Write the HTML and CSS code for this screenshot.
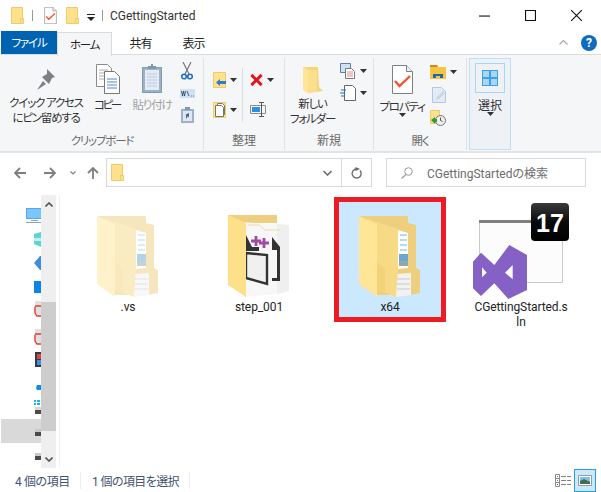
FILE: index.html
```html
<!DOCTYPE html>
<html lang="ja">

<head>
  <meta charset="UTF-8">
  <title>CGettingStarted</title>
  <link rel="stylesheet" href="styles.css">
</head>

<body>
  <svg class="defs" width="0" height="0">
    <symbol id="mini-folder" viewBox="0 0 13 17">
      <path d="M.5.5h11v16H.5z" fill="#fee08d" stroke="#eccd6a" />
      <path d="M9.5 16.5v-5h3v5z" fill="#fee08d" stroke="#eccd6a" />
    </symbol>
    <symbol id="arrow-down" viewBox="0 0 7 4">
      <path d="M0 0h7L3.500 4z" fill="#333" />
    </symbol>
    <symbol id="check-doc" viewBox="0 0 21 29">
      <path d="M.5.5h14l6 6v22H.5z" fill="#fff" stroke="#808080" />
      <path d="M14.500.5v6h6" fill="#eee" stroke="#808080" />
      <path d="M3 16l4.500 5L18 11" fill="none" stroke="#f0562a" stroke-width="2.400" />
    </symbol>
    <symbol id="big-folder" viewBox="0 0 62 82">
      <path d="M0 0h49v7l8 2v43l4 2v23l-10 2H18z" fill="#eecf7e" />
      <path d="M39 14l10 3v35l-10 1z" fill="#fff" />
      <path d="M41 19h7M41 24h7M41 29h7M41 34h7" stroke="#70b5e0" />
      <path d="M40 38h9v12h-9z" fill="#6aa8d2" />
      <path d="M40 45h9v5h-9z" fill="#8fa9a8" />
      <path d="M37 58l15-1v22l-15 2z" fill="#f2f2f2" />
      <path d="M38 63h13M38 68h13M38 73h13" stroke="#c9c9c9" />
      <path d="M9 3l30 10v39l-2 29-28-11z" fill="#f7da86" />
      <path d="M0 0l18 8v73L0 68z" fill="#ffe596" />
      <path d="M18 46l8 7v24l-8-3z" fill="#f3d27a" />
    </symbol>
  </svg>

  <div class="window">
    <div class="titlebar">
      <svg class="qa-folder"><use href="#mini-folder" /></svg>
      <i class="qa-sep"></i>
      <svg class="qa-check"><use href="#check-doc" /></svg>
      <svg class="qa-folder"><use href="#mini-folder" /></svg>
      <svg class="qa-menu" viewBox="0 0 8 7">
        <path d="M0 0h8v1H0zM0 3h8L4 7z" fill="#222" />
      </svg>
      <i class="qa-sep"></i>
      <span class="title">CGettingStarted</span>
      <div class="win-controls">
        <svg viewBox="0 0 10 10"><path d="M0 5.500h10" stroke="#111" /></svg>
        <svg viewBox="0 0 10 10"><path d="M.5.500h9v9h-9z" fill="none" stroke="#111" /></svg>
        <svg viewBox="0 0 10 10"><path d="M0 0l10 10M10 0L0 10" stroke="#111" /></svg>
      </div>
    </div>

    <div class="tabs">
      <span class="tab tab-file kana">ファイル</span>
      <span class="tab tab-home kana">ホーム</span>
      <span class="tab tab-share">共有</span>
      <span class="tab tab-view">表示</span>
      <svg class="collapse" viewBox="0 0 9 5">
        <path d="M.5 4.500l4-4 4 4" fill="none" stroke="#a8a8a8" stroke-width="1.200" />
      </svg>
      <span class="help">?</span>
    </div>

    <div class="ribbon">
      <section class="group group-clipboard">
        <div class="group-body">
          <div class="big big-pin">
            <svg class="pin" viewBox="0 0 20 23">
              <path d="M11 1l8 8-3 1-3 6-7-7 5-3zM7 13l-6 9 9-6z" fill="#7b8086" />
            </svg>
            <span class="kana">クイック アクセス<br>にピン留めする</span>
          </div>
          <div class="big big-copy">
            <svg viewBox="0 0 24 30">
              <path d="M.5.500h11l4 4v18H.5z" fill="#fff" stroke="#8a8a8a" />
              <path d="M3 6h9M3 9h10M3 12h10M3 15h10" stroke="#aaa" />
              <path d="M8.500 7.500h10l5 5v17h-15z" fill="#fff" stroke="#777" />
              <path d="M11 15h10M11 18h10M11 21h10M11 24h10" stroke="#4a86c8" />
            </svg>
            <span class="kana tight">コピー</span>
          </div>
          <div class="big big-paste">
            <svg viewBox="0 0 20 29">
              <path d="M.5 3.500h19v25H.5z" fill="#9db2c8" stroke="#8197b0" />
              <path d="M3 6h14v20H3z" fill="#e4ebf5" />
              <path d="M5 10h10M5 13h10M5 16h10M5 19h10M5 22h10" stroke="#bfcbdc" />
              <path d="M6 4V2h3V0h2v2h3v3H6z" fill="#8197b0" />
            </svg>
            <span class="kana">貼り付け</span>
          </div>
          <div class="small-stack">
            <svg class="scissors" viewBox="0 0 12 18">
              <path d="M2 0l6 12M10 0L4 12" stroke="#777" stroke-width="1.200" />
              <circle cx="3" cy="14.500" r="2.300" fill="none" stroke="#1f74c0" stroke-width="1.600" />
              <circle cx="9" cy="14.500" r="2.300" fill="none" stroke="#1f74c0" stroke-width="1.600" />
            </svg>
            <svg class="copy-path" viewBox="0 0 15 9">
              <path d="M0 0h15v9H0z" fill="#cfe2f5" />
              <path d="M1.500 2l1 5 1-5 1 5 1-5M7 2l2 5M11 7h.8M13 7h.8" stroke="#23415f" stroke-width=".8" fill="none" />
            </svg>
            <svg class="shortcut" viewBox="0 0 13 16">
              <path d="M0 2h13v14H0z" fill="#9db2c8" />
              <path d="M2 4h9v10H2z" fill="#dfe7f2" />
              <path d="M4 0h5v3H4z" fill="#8197b0" />
              <path d="M5 12V8h-1l4-2v5l-1-2-2 3z" fill="#4a6585" />
            </svg>
          </div>
        </div>
        <span class="group-label kana">クリップボード</span>
      </section>

      <section class="group group-organize">
        <div class="group-body">
          <div class="org-col">
            <div class="small-drop">
              <svg class="org-icon" viewBox="0 0 13 16">
                <path d="M.5.500h12v15H.500z" fill="#fee08d" stroke="#eccd6a" />
                <path d="M13 9H7V7l-4 3.500L7 14v-2h6z" fill="#2a7fd0" />
              </svg>
              <svg class="caret"><use href="#arrow-down" /></svg>
            </div>
            <div class="small-drop">
              <svg class="org-icon" viewBox="0 0 13 16">
                <path d="M.5.500h12v15H.500z" fill="#fee08d" stroke="#eccd6a" />
                <path d="M4.500 1.500h5l2 2v9h-7z" fill="#fff" stroke="#777" />
                <path d="M2.500 3.500h6l2 2v9h-8z" fill="#fff" stroke="#777" />
              </svg>
              <svg class="caret"><use href="#arrow-down" /></svg>
            </div>
          </div>
          <i class="org-sep"></i>
          <div class="org-col">
            <div class="small-drop">
              <svg class="org-icon" viewBox="0 0 14 14">
                <path d="M1.500 1.500l11 11M12.500 1.500l-11 11" stroke="#e3141e" stroke-width="3.200" />
              </svg>
              <svg class="caret"><use href="#arrow-down" /></svg>
            </div>
            <svg class="rename" viewBox="0 0 16 15">
              <path d="M.5 3.500h15v8H.5z" fill="#f5f6f7" stroke="#8a8a8a" />
              <path d="M2 5h8v5H2z" fill="#2f8fe0" />
              <path d="M9 .5h5M11.500.500v14M9 14.500h5" stroke="#555" fill="none" />
            </svg>
          </div>
        </div>
        <span class="group-label">整理</span>
      </section>

      <section class="group group-new">
        <div class="group-body">
          <div class="big big-folder">
            <svg viewBox="0 0 20 27">
              <path d="M0 0h15l1 20 4 4-15 2z" fill="#f6d579" />
              <path d="M0 0l5 3 1 24-6-4z" fill="#ffe596" />
              <path d="M5 3h9v22H5z" fill="#fadf8c" />
            </svg>
            <span class="kana">新しい<br>フォルダー</span>
          </div>
          <div class="small-stack-new">
            <div class="small-drop">
              <svg class="new-icon" viewBox="0 0 16 16">
                <path d="M.5.500h10v9H.500z" fill="#cfe2f5" stroke="#5f7f9f" />
                <path d="M5.500 5.500h6l3 3v7h-9z" fill="#fff" stroke="#777" />
                <path d="M7 9h6M7 11h6M7 13h6" stroke="#e08a8a" />
              </svg>
              <svg class="caret"><use href="#arrow-down" /></svg>
            </div>
            <div class="small-drop">
              <svg class="new-icon" viewBox="0 0 16 16">
                <path d="M4.500.500h8l3 3v12h-11z" fill="#fff" stroke="#666" />
                <path d="M1 5h5M0 8h5M1 11h4" stroke="#1f74c0" stroke-width="1.200" />
              </svg>
              <svg class="caret"><use href="#arrow-down" /></svg>
            </div>
          </div>
        </div>
        <span class="group-label">新規</span>
      </section>

      <section class="group group-open">
        <div class="group-body">
          <div class="big big-props">
            <svg><use href="#check-doc" /></svg>
            <span class="kana">プロパティ</span>
            <svg class="caret"><use href="#arrow-down" /></svg>
          </div>
          <div class="small-stack-open">
            <div class="small-drop">
              <svg class="open-icon" viewBox="0 0 16 14">
                <path d="M0 0h7l1 2h8v12H0z" fill="#f5c440" />
                <path d="M0 0h7l1 2H0z" fill="#c98a1e" />
                <path d="M3 13V9h10v4h-3v-2H6v2z" fill="#1f66b0" />
              </svg>
              <svg class="caret"><use href="#arrow-down" /></svg>
            </div>
            <svg class="open-edit" viewBox="0 0 14 16">
              <path d="M.5.500h9l4 4v11H.500z" fill="#e3ebf6" stroke="#b8c6dc" />
              <path d="M4 13l1-3 6-6 2 2-6 6z" fill="#c8d4e6" />
            </svg>
            <svg class="open-history" viewBox="0 0 16 16">
              <path d="M.5.500h9v13H.500z" fill="#fee08d" stroke="#eccd6a" />
              <circle cx="10.500" cy="10.500" r="5" fill="#eee" stroke="#777" />
              <path d="M10.500 7.500v3l2 1" fill="none" stroke="#555" />
              <path d="M1 10l4-3v2h2v3H5v2z" fill="#2f9a3a" />
            </svg>
          </div>
        </div>
        <span class="group-label kana">開く</span>
      </section>

      <section class="group-select">
        <div class="select-btn">
          <svg viewBox="0 0 16 16">
            <path d="M0 0h16v16H0z" fill="#3fa0e8" />
            <path d="M1 1h6v6H1zM9 1h6v6H9zM1 9h6v6H1zM9 9h6v6H9z" fill="#a9d6f7" />
          </svg>
        </div>
        <span>選択</span>
        <svg class="caret"><use href="#arrow-down" /></svg>
      </section>
    </div>

    <div class="navrow">
      <svg class="nav-arrow" viewBox="0 0 12 12">
        <path d="M12 6H1.500M6 1L1 6l5 5" fill="none" stroke="#7f7f7f" stroke-width="1.800" />
      </svg>
      <svg class="nav-arrow nav-forward" viewBox="0 0 12 12">
        <path d="M0 6h10.500M6 1l5 5-5 5" fill="none" stroke="#7f7f7f" stroke-width="1.800" />
      </svg>
      <svg class="nav-recent" viewBox="0 0 6 4">
        <path d="M.5.500L3 3 5.500.500" fill="none" stroke="#808080" stroke-width="1.200" />
      </svg>
      <svg class="nav-arrow nav-up" viewBox="0 0 12 12">
        <path d="M6 12V1.500M1 6l5-5 5 5" fill="none" stroke="#7f7f7f" stroke-width="1.800" />
      </svg>
      <div class="address">
        <svg class="addr-folder"><use href="#mini-folder" /></svg>
        <span class="addr-drop">
          <svg viewBox="0 0 9 6"><path d="M.5 1l4 4 4-4" fill="none" stroke="#666" stroke-width="1.500" /></svg>
        </span>
        <span class="addr-refresh">
          <svg viewBox="0 0 11 12">
            <path d="M9 3.500a4.500 4.500 0 1 1-3.500-1.500H7" fill="none" stroke="#666" stroke-width="1.300" />
            <path d="M3.500 0v4L8 2z" fill="#666" transform="translate(1 0)" />
          </svg>
        </span>
      </div>
      <div class="search">
        <svg viewBox="0 0 12 12">
          <circle cx="7.500" cy="4.500" r="3.800" fill="none" stroke="#999" />
          <path d="M5 7.500L.5 11.500" stroke="#999" stroke-width="1.200" />
        </svg>
        <span>CGettingStartedの検索</span>
      </div>
    </div>

    <div class="content">
      <div class="navpane">
        <svg class="nav-tree" viewBox="0 0 40 273">
          <path d="M0 224h40v24H0z" fill="#d9d9d9" />
          <path d="M25 13h15v11H25z" fill="#52a8ef" />
          <path d="M26 14h14v9H26z" fill="#7cc7fa" />
          <path d="M30 25h7v1h-7zM25 27h15v1H25z" fill="#8aa0b4" />
          <path d="M33 39l7-2v15l-7-3z" fill="#5ed5d5" />
          <path d="M33 43h7v3h-7z" fill="#bdf0ee" />
          <path d="M33 68l6-7h1v14h-1z" fill="#3d8de0" />
          <path d="M33 86h7v12h-7z" fill="#0a84e8" />
          <path d="M34 106h6v5l-6-1zM33 111h7v9h-5l-2-3z" fill="#e0e0e0" />
          <path d="M34 111h6M34 112v6l2 3h4" fill="none" stroke="#e23a22" stroke-width="1.300" />
          <path d="M34 134h6v5h-6zM33 139h7v9h-5l-2-3z" fill="#e0e0e0" />
          <path d="M34 139h6M34 140v6l2 3h4" fill="none" stroke="#e23a22" stroke-width="1.300" />
          <path d="M34 157h6v15h-6z" fill="#3a3a3a" />
          <path d="M36 159h4v5h-4z" fill="#d84a4a" />
          <path d="M36 165h4v5h-4z" fill="#3d8de0" />
          <path d="M36 190h4v5h-4l-1-2z" fill="#0a8cf0" />
          <path d="M33 205h2v2h-2zM36 205h3v2h-3zM33 208h2v2h-2zM36 208h3v2h-3z" fill="#18b4f0" />
          <path d="M34 212h6v3h-6z" fill="#d8d8d8" />
          <path d="M34 215h6v4h-6zM34 237h6v4h-6zM34 261h6v4h-6z" fill="#4a4a4a" />
          <path d="M34 234h6v3h-6zM34 258h6v3h-6z" fill="#c8c8c8" />
        </svg>
        <div class="scrollbar">
          <div class="scroll-top">
            <svg viewBox="0 0 8 5"><path d="M.5 4.500L4 1l3.500 3.500" fill="none" stroke="#555" stroke-width="1.600" /></svg>
          </div>
          <div class="scroll-thumb"></div>
          <div class="scroll-bottom">
            <svg viewBox="0 0 8 5"><path d="M.5.500L4 4 7.500.500" fill="none" stroke="#555" stroke-width="1.600" /></svg>
          </div>
        </div>
      </div>

      <div class="files">
        <div class="file">
          <div class="file-icon">
            <svg class="folder hidden-folder"><use href="#big-folder" /></svg>
          </div>
          <span class="file-name">.vs</span>
        </div>

        <div class="file">
          <div class="file-icon">
            <svg class="folder" viewBox="0 0 62 84">
              <path d="M0 0h49v8H0z" fill="#eecf7e" />
              <path d="M11 7l50 3v66l-12 3-33 3z" fill="#f7f7f7" />
              <path d="M49 9l12 1v66l-12 3z" fill="#efefef" />
              <path d="M18 20l6 12h7v4H17z" fill="#333" />
              <path d="M44 22l8 10v34h-8v-3h5V35h-5z" fill="#333" />
              <path d="M18 38l21 2v29l-21-6z" fill="#f0f0f0" stroke="#333" stroke-width="2.400" />
              <path d="M20 10h11l6 5h15" fill="none" stroke="#ecdba5" />
              <path d="M28 21v10M23 26h10M36 23v10M31 28h10" fill="none" stroke="#a04aa4" stroke-width="2.800" />
              <path d="M0 0l18 8v74L0 70z" fill="#ffe08a" />
            </svg>
          </div>
          <span class="file-name">step_001</span>
        </div>

        <div class="file is-selected">
          <div class="file-icon">
            <svg class="folder"><use href="#big-folder" /></svg>
          </div>
          <span class="file-name">x64</span>
        </div>

        <div class="file">
          <div class="file-icon">
            <svg class="sln" viewBox="0 0 100 100">
              <defs>
                <linearGradient id="badge" x1="0" y1="0" x2="0" y2="1">
                  <stop offset="0" stop-color="#3a3a3a" />
                  <stop offset=".5" stop-color="#0a0a0a" />
                  <stop offset="1" stop-color="#000" />
                </linearGradient>
              </defs>
              <path d="M8.500 20.500h83v62h-83z" fill="#fcfcfc" stroke="#cacaca" />
              <path d="M8 20h55v3H8z" fill="#808080" />
              <rect x="60" y="3" width="38" height="38" rx="4" fill="url(#badge)" />
              <text class="badge-text" x="79" y="32">17</text>
              <path fill-rule="evenodd" fill="#8661c5" d="M2 61.700L10 52.700 23.300 65 38.300 45 56 55V90L37.300 99 23.300 83.300 10 96 2 88.300zM11 67.300L15.700 72.700 11 77.300zM41.700 65L34 72.700 41.700 79.300z" />
            </svg>
          </div>
          <span class="file-name">CGettingStarted.sln</span>
        </div>
      </div>
    </div>

    <div class="statusbar">
      <span class="status-count">4 個の項目</span>
      <span class="status-selected">1 個の項目を選択</span>
      <div class="view-switch">
        <svg class="view-details" viewBox="0 0 16 13">
          <path d="M.5.500h4v12h-4z" fill="#fff" stroke="#8a8a8a" />
          <path d="M.5 4.500h4M.5 8.500h4" stroke="#8a8a8a" />
          <path d="M2 2h1v1H2zM2 6h1v1H2z" fill="#4a86c8" />
          <path d="M2 10h1v1H2z" fill="#d03030" />
          <path d="M6 2.500h5M12 2.500h4M6 6.500h5M12 6.500h4M6 10.500h5M12 10.500h4" stroke="#808080" />
        </svg>
        <div class="view-large">
          <svg viewBox="0 0 14 11">
            <path d="M.5.500h13v10H.500z" fill="#fff" stroke="#9a9a9a" />
            <path d="M2 2h10v7H2z" fill="#7cc0ee" />
            <path d="M2 6l4-2 6 3v2H2z" fill="#3f6f4f" />
          </svg>
        </div>
      </div>
    </div>
  </div>
</body>

</html>
```

FILE: styles.css
```css
* {
  box-sizing: border-box;
}

html,
body {
  margin: 0;
  padding: 0;
  background-color: #fff;
}

body {
  font-family: Roboto, "Noto Sans CJK JP", sans-serif;
  font-size: 12px;
  color: #222;
  font-feature-settings: "palt";
}

svg {
  display: block;
  flex: none;
}

.defs {
  position: absolute;
}

.window {
  width: 601px;
  height: 492px;
  display: flex;
  flex-direction: column;
  overflow: hidden;
}

/* kana runs narrower in the ribbon than the CJK font sets it */
.kana {
  font-size: 11.5px;
  letter-spacing: -1.2px;
}

.tight {
  letter-spacing: -2.4px;
}

/* title bar */
.titlebar {
  height: 31px;
  flex: none;
  display: flex;
  align-items: center;
  padding-left: 11px;
}

.qa-folder {
  width: 13px;
  height: 17px;
}

.qa-sep {
  width: 1px;
  height: 11px;
  margin: 0 11px 0 8px;
  background-color: #9a9a9a;
}

.qa-check {
  width: 13px;
  height: 17px;
  margin-right: 9px;
}

.qa-menu {
  width: 8px;
  height: 7px;
  margin-left: 8px;
  margin-top: 3px;
}

.qa-menu + .qa-sep {
  margin-left: 7px;
  margin-right: 7px;
}

.title {
  color: #333;
}

.win-controls {
  margin-left: auto;
  margin-right: 19px;
  display: flex;
  gap: 35px;
}

.win-controls svg {
  width: 11px;
  height: 11px;
}

/* tabs */
.tabs {
  height: 24px;
  flex: none;
  display: flex;
  align-items: center;
  padding-left: 1px;
  border-bottom: 1px solid #dadbdc;
}

.tab {
  height: 24px;
  display: flex;
  align-items: center;
  justify-content: center;
  white-space: nowrap;
}

.tab-file {
  width: 56px;
  height: 23px;
  margin-top: -1px;
  background-color: #0063b1;
  color: #fff;
}

.tab-home {
  width: 55px;
  background-color: #f5f6f7;
  border: 1px solid #dadbdc;
  border-bottom: 0;
  position: relative;
  top: 1px;
}

.tab-share {
  margin-left: 17px;
  width: 23px;
  letter-spacing: -1px;
}

.tab-view {
  margin-left: 30px;
  width: 23px;
  letter-spacing: -1px;
}

.collapse {
  width: 9px;
  height: 5px;
  margin-left: auto;
  margin-right: 13px;
}

.help {
  width: 16px;
  height: 16px;
  margin-right: 4px;
  border-radius: 50%;
  background-color: #0f6cbd;
  color: #fff;
  font-weight: bold;
  font-size: 12px;
  line-height: 16px;
  text-align: center;
}

/* ribbon */
.ribbon {
  height: 98px;
  flex: none;
  display: flex;
  padding: 3px 0 1px 1px;
  background-color: #f5f6f7;
  border-bottom: 2px solid #e3e4e5;
  line-height: 15px;
  text-align: center;
}

.group {
  display: flex;
  flex-direction: column;
  border-right: 1px solid #e1e2e3;
}

.group-body {
  flex: 1;
  display: flex;
}

.group-label {
  height: 21px;
  color: #6a6a6a;
  padding-top: 5px;
}

.group-clipboard {
  width: 203px;
}

.group-organize {
  width: 81px;
}

.group-new {
  width: 89px;
}

.group-open {
  width: 93px;
}

.big {
  display: flex;
  flex-direction: column;
  align-items: center;
  color: #333;
  white-space: nowrap;
}

.big svg:first-child {
  margin-top: 6px;
  margin-bottom: 4px;
}

.big-pin {
  width: 92px;
  padding-right: 2px;
}

.pin {
  width: 20px;
  height: 23px;
  margin-top: 10px !important;
  margin-bottom: 5px !important;
}

.big-copy {
  width: 40px;
  margin-left: -6px;
}

.big-copy svg {
  width: 24px;
  height: 30px;
  margin-left: 2px;
}

.big-paste svg {
  width: 20px;
  height: 29px;
  margin-bottom: 5px !important;
}

.big-paste {
  width: 50px;
  color: #a2a2a2;
}

.small-stack {
  display: flex;
  flex-direction: column;
  align-items: center;
  width: 16px;
  margin-left: 2px;
  padding-top: 4px;
}

.scissors {
  width: 12px;
  height: 18px;
  margin-bottom: 9px;
}

.copy-path {
  width: 15px;
  height: 9px;
  margin-bottom: 9px;
}

.shortcut {
  width: 13px;
  height: 16px;
}

.group-organize .group-body {
  padding: 14px 0 0 9px;
}

.org-col {
  width: 29px;
  display: flex;
  flex-direction: column;
  gap: 14px;
}

.org-col + .org-sep + .org-col {
  padding-left: 7px;
  width: 34px;
}

.org-sep {
  width: 1px;
  height: 54px;
  margin-top: -4px;
  background-color: #dcdddf;
}

.small-drop {
  display: flex;
  align-items: center;
  gap: 4px;
}

.org-icon {
  width: 13px;
  height: 16px;
}

.caret {
  width: 7px;
  height: 4px;
}

.rename {
  width: 16px;
  height: 15px;
}

.big-folder {
  width: 55px;
}

.big-folder svg:first-child {
  width: 20px;
  height: 27px;
  margin-top: 9px;
  margin-bottom: 3px;
}

.small-stack-new {
  display: flex;
  flex-direction: column;
  gap: 6px;
  padding-top: 5px;
}

.new-icon {
  width: 16px;
  height: 16px;
}

.big-props {
  width: 56px;
}

.big-props svg:first-child {
  width: 21px;
  height: 29px;
  margin-top: 7px;
  margin-bottom: 6px;
}

.big-props .caret {
  margin-top: -2px;
}

.small-stack-open {
  display: flex;
  flex-direction: column;
  padding-top: 7px;
}

.open-icon {
  width: 16px;
  height: 14px;
}

.open-edit {
  width: 14px;
  height: 16px;
  margin: 8px 0 7px 2px;
}

.open-history {
  width: 16px;
  height: 16px;
}

.group-select {
  width: 42px;
  height: 92px;
  margin-left: 2px;
  padding: 4px 5px 0;
  display: flex;
  flex-direction: column;
  align-items: center;
  background-color: #eef2f6;
  border: 1px solid #c3dff5;
  color: #333;
}

.select-btn {
  width: 30px;
  height: 30px;
  display: flex;
  align-items: center;
  justify-content: center;
  border: 1px solid #a8d5f7;
  margin-bottom: 6px;
  flex: none;
}

.select-btn svg {
  width: 16px;
  height: 16px;
}

.group-select .caret {
  margin-top: -2px;
}

/* address row */
.navrow {
  height: 42px;
  flex: none;
  display: flex;
  align-items: center;
  padding: 0 14px 3px;
}

.nav-arrow {
  width: 12px;
  height: 12px;
}

.nav-forward {
  margin-left: 18px;
}

.nav-recent {
  width: 6px;
  height: 4px;
  margin-left: 14px;
}

.nav-up {
  margin-left: 11px;
}

.address {
  width: 266px;
  height: 29px;
  margin-left: 7px;
  display: flex;
  align-items: center;
  border: 1px solid #d9d9d9;
}

.addr-folder {
  width: 13px;
  height: 17px;
  margin-left: 4px;
  margin-right: auto;
}

.addr-drop,
.addr-refresh {
  height: 100%;
  display: flex;
  align-items: center;
  justify-content: center;
}

.addr-drop {
  width: 29px;
  border-right: 1px solid #d9d9d9;
}

.addr-drop svg {
  width: 9px;
  height: 6px;
}

.addr-refresh {
  width: 29px;
}

.addr-refresh svg {
  width: 11px;
  height: 12px;
}

.search {
  width: 200px;
  height: 29px;
  margin-left: 14px;
  padding-left: 14px;
  display: flex;
  align-items: center;
  gap: 14px;
  border: 1px solid #d9d9d9;
  color: #6d6d6d;
}

.search svg {
  width: 12px;
  height: 12px;
}

/* file area */
.content {
  flex: 1;
  min-height: 0;
  display: flex;
}

.navpane {
  width: 60px;
  flex: none;
  display: flex;
  padding-left: 1px;
  border-right: 1px solid #f0f0f0;
}

.nav-tree {
  width: 40px;
  height: 273px;
}

.scrollbar {
  width: 15px;
  display: flex;
  flex-direction: column;
  background-color: #efefef;
}

.scroll-top {
  height: 107px;
  padding-top: 7px;
}

.scroll-thumb {
  height: 129px;
  background-color: #cdcdcd;
}

.scroll-bottom {
  flex: 1;
  display: flex;
  align-items: flex-end;
  padding-bottom: 6px;
}

.scroll-top svg,
.scroll-bottom svg {
  width: 8px;
  height: 5px;
  margin: 0 auto;
}

.files {
  flex: 1;
  display: flex;
  align-items: flex-start;
  gap: 19px;
  padding: 2px 0 0 12px;
}

.file {
  width: 112px;
  height: 125px;
  flex: none;
  display: flex;
  flex-direction: column;
  align-items: center;
  border: 5px solid transparent;
  text-align: center;
  line-height: 15px;
}

.is-selected {
  border-color: #ed1c24;
  background-color: #cce8ff;
}

.file-icon {
  height: 98px;
  flex: none;
  display: flex;
  justify-content: center;
  align-items: flex-end;
  padding-bottom: 1px;
}

.folder {
  width: 62px;
  height: 84px;
}

.hidden-folder {
  opacity: 0.5;
}

.sln {
  width: 100px;
  height: 100px;
  margin-bottom: -1px;
}

.badge-text {
  fill: #fff;
  font-family: "Liberation Sans", sans-serif;
  font-size: 25px;
  font-weight: bold;
  text-anchor: middle;
}

.file-name {
  width: 95px;
  flex: none;
  word-break: break-all;
  overflow-wrap: anywhere;
  letter-spacing: -0.1px;
}

/* status bar */
.statusbar {
  height: 24px;
  flex: none;
  display: flex;
  align-items: center;
  padding-left: 15px;
  color: #3f5470;
}

.status-count {
  width: 66px;
  border-right: 1px solid #eee;
  letter-spacing: -0.4px;
}

.status-selected {
  margin-left: 11px;
  width: 98px;
  border-right: 1px solid #eee;
  letter-spacing: -0.6px;
}

.view-switch {
  margin-left: auto;
  margin-right: 5px;
  display: flex;
  align-items: center;
  gap: 3px;
}

.view-details {
  width: 16px;
  height: 13px;
}

.view-large {
  width: 22px;
  height: 23px;
  display: flex;
  align-items: center;
  justify-content: center;
  background-color: #cce8ff;
  border: 1px solid #26a0da;
}

.view-large svg {
  width: 14px;
  height: 11px;
}
```
